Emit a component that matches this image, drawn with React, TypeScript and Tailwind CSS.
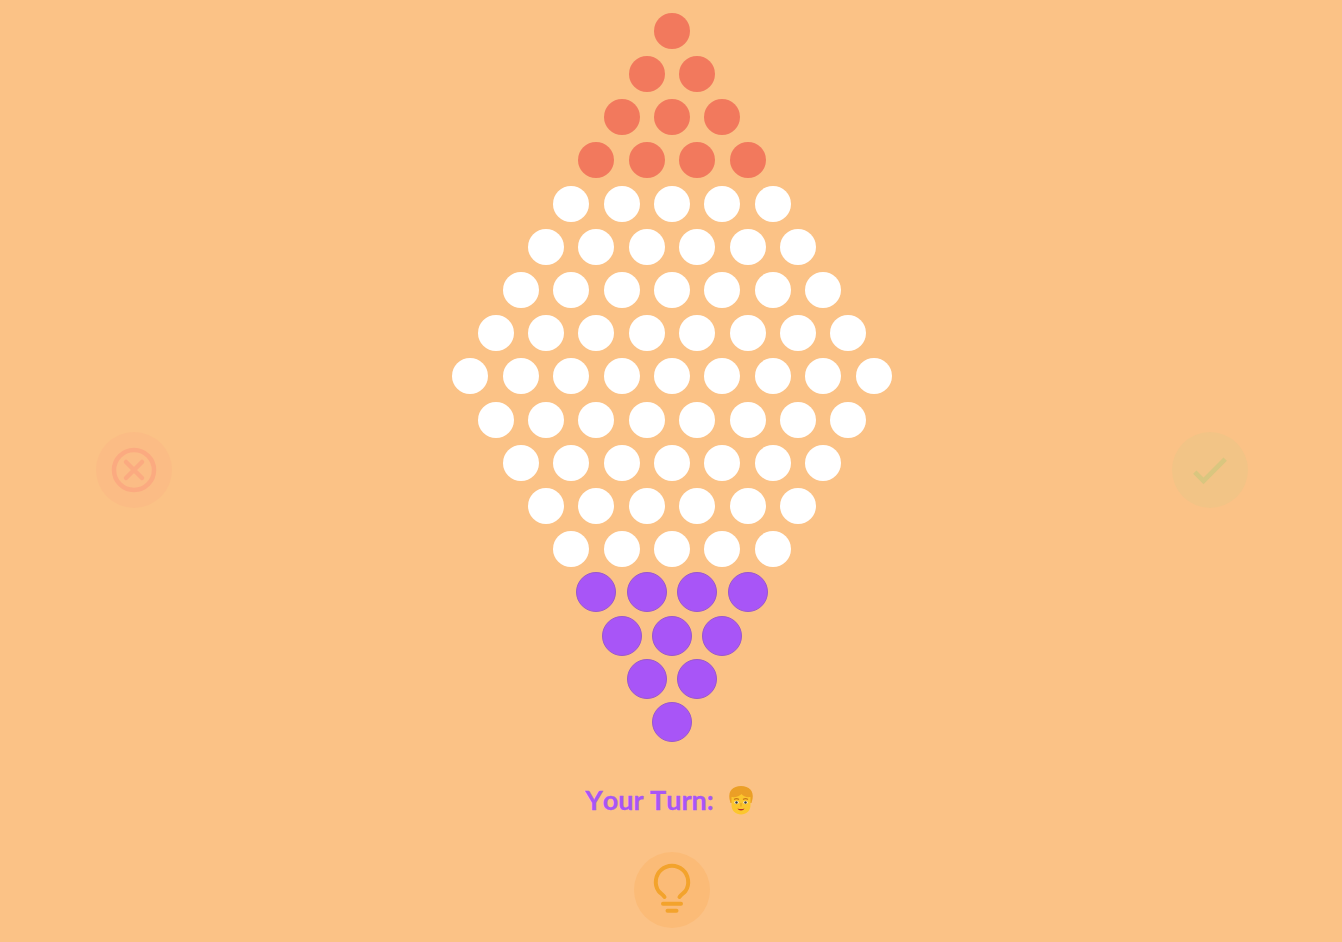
const rows = [
  { count: 1, kind: "red" },
  { count: 2, kind: "red" },
  { count: 3, kind: "red" },
  { count: 4, kind: "red" },
  { count: 5, kind: "white" },
  { count: 6, kind: "white" },
  { count: 7, kind: "white" },
  { count: 8, kind: "white" },
  { count: 9, kind: "white" },
  { count: 8, kind: "white" },
  { count: 7, kind: "white" },
  { count: 6, kind: "white" },
  { count: 5, kind: "white" },
  { count: 4, kind: "purple" },
  { count: 3, kind: "purple" },
  { count: 2, kind: "purple" },
  { count: 1, kind: "purple" },
]

const pegClass: Record<string, string> = {
  red: "h-9 w-9 rounded-full bg-[#f2795d]",
  white: "h-9 w-9 rounded-full bg-white",
  purple: "h-10 w-10 shrink-0 rounded-full border-[1.5px] border-[#9a58cc] bg-[#a855f7]",
}

function Board() {
  return (
    <div className="w-[453.6px] shrink-0 pt-[9.3px]">
      {rows.map((row, i) => (
        <div key={i} className="flex h-[43.2px] justify-center">
          {Array.from({ length: row.count }).map((_, j) => (
            <div key={j} className="flex h-[43.2px] w-[50.4px] items-center justify-center">
              <div className={pegClass[row.kind]} />
            </div>
          ))}
        </div>
      ))}
    </div>
  )
}

function ManFace() {
  return (
    <svg width="28" height="30" viewBox="0 0 28 30" className="shrink-0">
      <path d="M2.500 14C1 6 6 1 14 1s13 5 11.500 13l-1 4h-21z" fill="#eb9f26" />
      <path d="M4.500 12c4 .5 8-.5 10-3 1.500 2.500 5 3.500 9 3v8c0 6-4.500 9.500-9.500 9.500S4.500 26 4.500 20z" fill="#fcc62d" />
      <path d="M7 14.500c1.500-1 3.500-1 5 0M16 14.500c1.500-1 3.500-1 5 0" stroke="#c9761a" strokeWidth="1.100" fill="none" />
      <ellipse cx="9.500" cy="17.500" rx="2.200" ry="1.400" fill="#f5efe0" />
      <ellipse cx="18.500" cy="17.500" rx="2.200" ry="1.400" fill="#f5efe0" />
      <circle cx="9.500" cy="17.500" r="1.200" fill="#3d3a35" />
      <circle cx="18.500" cy="17.500" r="1.200" fill="#3d3a35" />
      <path d="M14 18v3.500" stroke="#e0a020" strokeWidth="1.100" />
      <path d="M10.500 23.500c2 .8 5 .8 7 0-1 2.500-6 2.500-7 0z" fill="#b8322a" />
    </svg>
  )
}

export default function App() {
  return (
    <div className="flex h-[942px] w-full overflow-hidden bg-[#fbc286] pl-[2px] font-['Lato',sans-serif]">
      <div className="flex flex-1 items-center pb-[2px] pl-[94px]">
        <button className="flex h-[76px] w-[76px] items-center justify-center rounded-full bg-[#fbbc85]">
          <svg width="46" height="46" viewBox="0 0 46 46" fill="none" stroke="#fbaa80" strokeWidth="4.500">
            <circle cx="23" cy="23" r="20" />
            <path d="M15 15l16 16M31 15L15 31" strokeLinecap="round" />
          </svg>
        </button>
      </div>

      <div className="flex shrink-0 flex-col items-center">
        <Board />
        <div className="mt-[41px] flex h-[32px] items-center gap-[13px] pr-[4px] text-[27px] font-bold text-[#a855f7] [font-kerning:none] [-webkit-text-stroke:0.3px_#a855f7]">
          <span>Your Turn:</span>
          <ManFace />
        </div>
        <button className="mt-[35.3px] flex h-[76px] w-[76px] items-center justify-center rounded-full bg-[#fbbb77]">
          <svg width="44" height="56" viewBox="0 2 44 56" fill="none" stroke="#f3a32c" strokeWidth="4" strokeLinecap="round">
            <path d="M14.500 37C13 34.500 10.500 33.500 8.500 31A16.200 16.200 0 1 1 35.500 31C33.500 33.500 31 34.500 29.500 37" />
            <path d="M13 43.700H31M17.500 50.700H26.500" />
          </svg>
        </button>
      </div>

      <div className="flex flex-1 items-center justify-end pb-[2px] pr-[94px]">
        <button className="flex h-[76px] w-[76px] items-center justify-center rounded-full bg-[#f2c486]">
          <svg width="52" height="52" viewBox="0 0 24 24" fill="none" stroke="#d9c67f" strokeWidth="2.200">
            <path d="M5 13l4 4L19 7" />
          </svg>
        </button>
      </div>
    </div>
  )
}
